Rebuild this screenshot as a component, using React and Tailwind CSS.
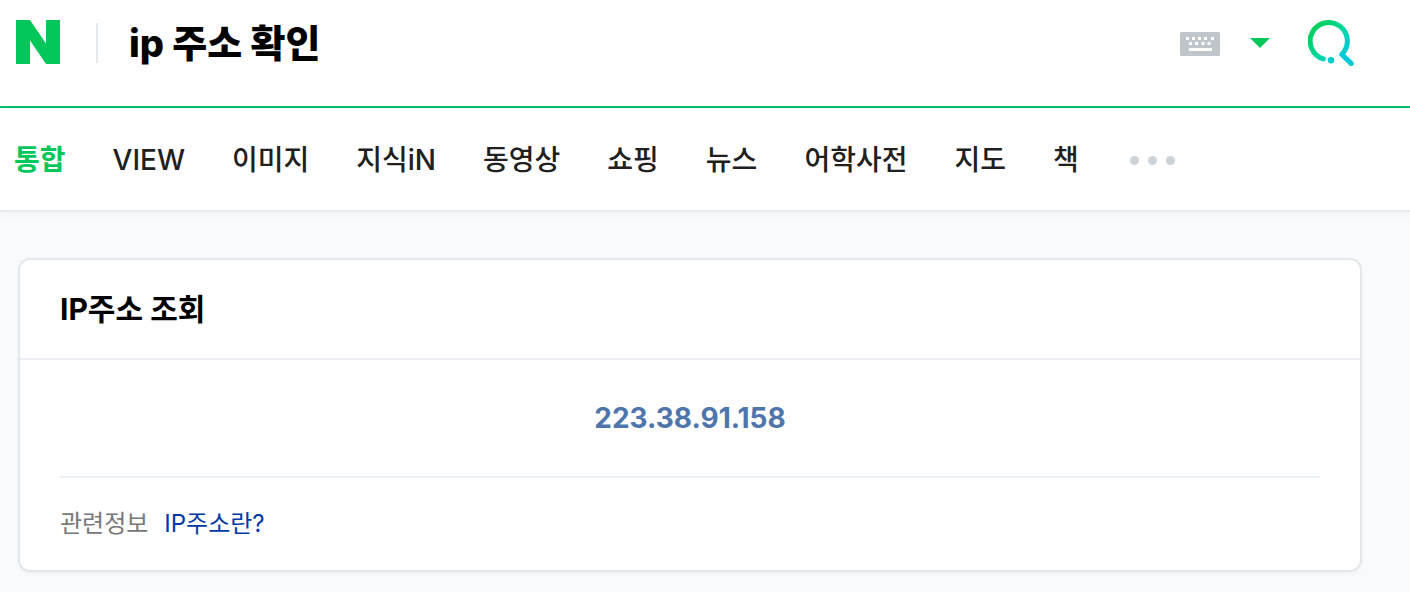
import { useState } from "react";

const TABS = ["통합", "VIEW", "이미지", "지식iN", "동영상", "쇼핑", "뉴스", "어학사전", "지도", "책"];

function NaverLogo() {
  return (
    <svg width="44" height="46" viewBox="0 0 44 46" aria-hidden="true">
      <path fill="#03c75a" d="M0 0H14L30 23.5V0H44V44H30L14 20.5V44H0Z" />
    </svg>
  );
}

function KeyboardIcon() {
  return (
    <svg width="40" height="26" viewBox="0 0 40 26" aria-hidden="true">
      <rect y="2" width="40" height="24" rx="1.5" fill="#bfc5ca" />
      <g fill="#fff">
        {[6, 12, 18, 24, 31].map((x) => (
          <rect key={x} x={x} y="7" width="3" height="3" />
        ))}
        {[9, 15, 21.5, 27.5].map((x) => (
          <rect key={x} x={x} y="12" width="3" height="3" />
        ))}
        <rect x="9" y="18" width="23" height="3" />
      </g>
    </svg>
  );
}

function SearchIcon() {
  return (
    <svg width="46" height="46" viewBox="0 0 46 46" fill="none" aria-hidden="true">
      <defs>
        <linearGradient id="search-tint" gradientUnits="userSpaceOnUse" x1="6" y1="8" x2="38" y2="38">
          <stop offset="0" stopColor="#03cf5d" />
          <stop offset="0.5" stopColor="#00d8a0" />
          <stop offset="0.9" stopColor="#00c8d8" />
        </linearGradient>
      </defs>
      <path
        d="M15.3 38.9A18.6 18.6 0 1 1 33.8 34.4L43.3 43.6"
        stroke="url(#search-tint)"
        strokeWidth="5"
        strokeLinecap="round"
        strokeLinejoin="round"
      />
      <circle cx="23" cy="40.3" r="3.2" fill="#00cbcb" />
    </svg>
  );
}

export default function App() {
  const [query, setQuery] = useState("ip 주소 확인");

  return (
    <div className="min-h-screen bg-[#f9fafc] font-['Inter','Noto_Sans_CJK_KR',sans-serif] text-black">
      <header className="border-b-2 border-[#03c06a] bg-white pt-5 pr-14 pb-10 pl-4">
        <form className="flex items-center" role="search" onSubmit={(e) => e.preventDefault()}>
          <a href="#home" aria-label="NAVER">
            <NaverLogo />
          </a>
          <span className="ml-9 h-10 w-0.5 bg-[#e3e8ec]" />
          <input
            type="text"
            aria-label="검색어"
            value={query}
            onChange={(e) => setQuery(e.target.value)}
            className="ml-[31px] h-[46px] min-w-0 flex-1 bg-transparent text-[38px] font-extrabold outline-none"
          />
          <button type="button" aria-label="입력기">
            <KeyboardIcon />
          </button>
          <button type="button" aria-label="자동완성 펼치기" className="ml-[30px]">
            <svg width="20" height="10" viewBox="0 0 20 10" aria-hidden="true">
              <path d="M0 0H20L10 10Z" fill="#03c75a" />
            </svg>
          </button>
          <button type="submit" aria-label="검색" className="ml-[38px]">
            <SearchIcon />
          </button>
        </form>
      </header>

      <nav className="flex h-[104px] items-center gap-[47px] border-b-2 border-[#e8eaed] bg-white pt-0.5 pl-[14px] whitespace-nowrap shadow-[0_2px_8px_rgba(0,0,0,0.04)]">
        {TABS.map((tab, i) => (
          <a
            key={tab}
            href={`#tab-${i}`}
            aria-current={i === 0 ? "page" : undefined}
            className={
              i === 0
                ? "text-[28px] leading-10 font-bold text-[#03c75a]"
                : "text-[28px] leading-10 font-medium text-[#202020]"
            }
          >
            {tab}
          </a>
        ))}
        <button type="button" aria-label="더보기" className="pl-1">
          <svg width="45" height="9" viewBox="0 0 45 9" fill="#cdd2d6" aria-hidden="true">
            <circle cx="4.5" cy="4.5" r="4.5" />
            <circle cx="22.5" cy="4.5" r="4.5" />
            <circle cx="40.5" cy="4.5" r="4.5" />
          </svg>
        </button>
      </nav>

      <main className="pt-[46px] pr-12 pb-5 pl-[18px]">
        <section className="rounded-xl border-2 border-[#e4e6ed] bg-white shadow-[0_2px_4px_rgba(0,0,0,0.04)]">
          <h2 className="border-b-2 border-[#ebeff3] px-10 py-7 text-[30px] leading-[42px] font-bold">
            IP주소 조회
          </h2>
          <div className="px-10">
            <p className="border-b-2 border-[#ebf0f5] py-9 text-center text-[28px] leading-[44px] font-bold text-[#4f76ac]">
              223.38.91.158
            </p>
            <p className="flex gap-4 py-7 text-[24px] leading-9">
              <span className="text-[#777]">관련정보</span>
              <a href="#what-is-ip" className="text-[#0038a8]">
                IP주소란?
              </a>
            </p>
          </div>
        </section>
      </main>
    </div>
  );
}
